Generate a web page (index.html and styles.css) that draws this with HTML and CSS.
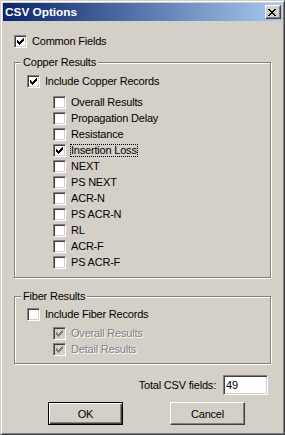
FILE: index.html
```html
<!DOCTYPE html>
<html>
<head>
<meta charset="utf-8">
<title>CSV Options</title>
<link rel="stylesheet" href="styles.css">
</head>
<body>
<div class="window">
  <div class="titlebar">
    <span class="title">CSV Options</span>
    <span class="close"><svg width="8" height="7" viewBox="0 0 8 7" shape-rendering="crispEdges"><path d="M0 0h2v1h-2z M6 0h2v1h-2z M1 1h2v1h-2z M5 1h2v1h-2z M2 2h4v1h-4z M3 3h2v1h-2z M2 4h4v1h-4z M1 5h2v1h-2z M5 5h2v1h-2z M0 6h2v1h-2z M6 6h2v1h-2z" fill="#000"/></svg></span>
  </div>
  <div class="content">
    <div class="row"><span class="cb"><svg class="chk" width="7" height="7" viewBox="0 0 7 7" shape-rendering="crispEdges"><path d="M0 2h1v3h-1z M1 3h1v3h-1z M2 4h1v3h-1z M3 3h1v3h-1z M4 2h1v3h-1z M5 1h1v3h-1z M6 0h1v3h-1z"/></svg></span><span class="lbl">Common Fields</span></div>

    <div class="group copper">
      <span class="legend">Copper Results</span>
      <div class="row"><span class="cb"><svg class="chk" width="7" height="7" viewBox="0 0 7 7" shape-rendering="crispEdges"><path d="M0 2h1v3h-1z M1 3h1v3h-1z M2 4h1v3h-1z M3 3h1v3h-1z M4 2h1v3h-1z M5 1h1v3h-1z M6 0h1v3h-1z"/></svg></span><span class="lbl">Include Copper Records</span></div>
      <div class="sublist">
        <div class="row"><span class="cb"></span><span class="lbl">Overall Results</span></div>
        <div class="row"><span class="cb"></span><span class="lbl">Propagation Delay</span></div>
        <div class="row"><span class="cb"></span><span class="lbl">Resistance</span></div>
        <div class="row"><span class="cb"><svg class="chk" width="7" height="7" viewBox="0 0 7 7" shape-rendering="crispEdges"><path d="M0 2h1v3h-1z M1 3h1v3h-1z M2 4h1v3h-1z M3 3h1v3h-1z M4 2h1v3h-1z M5 1h1v3h-1z M6 0h1v3h-1z"/></svg></span><span class="lbl focus">Insertion Loss</span></div>
        <div class="row"><span class="cb"></span><span class="lbl">NEXT</span></div>
        <div class="row"><span class="cb"></span><span class="lbl">PS NEXT</span></div>
        <div class="row"><span class="cb"></span><span class="lbl">ACR-N</span></div>
        <div class="row"><span class="cb"></span><span class="lbl">PS ACR-N</span></div>
        <div class="row"><span class="cb"></span><span class="lbl">RL</span></div>
        <div class="row"><span class="cb"></span><span class="lbl">ACR-F</span></div>
        <div class="row"><span class="cb"></span><span class="lbl">PS ACR-F</span></div>
      </div>
    </div>

    <div class="group fiber">
      <span class="legend">Fiber Results</span>
      <div class="row"><span class="cb"></span><span class="lbl">Include Fiber Records</span></div>
      <div class="sublist">
        <div class="row disabled"><span class="cb"><svg class="chk" width="7" height="7" viewBox="0 0 7 7" shape-rendering="crispEdges"><path d="M0 2h1v3h-1z M1 3h1v3h-1z M2 4h1v3h-1z M3 3h1v3h-1z M4 2h1v3h-1z M5 1h1v3h-1z M6 0h1v3h-1z"/></svg></span><span class="lbl">Overall Results</span></div>
        <div class="row disabled"><span class="cb"><svg class="chk" width="7" height="7" viewBox="0 0 7 7" shape-rendering="crispEdges"><path d="M0 2h1v3h-1z M1 3h1v3h-1z M2 4h1v3h-1z M3 3h1v3h-1z M4 2h1v3h-1z M5 1h1v3h-1z M6 0h1v3h-1z"/></svg></span><span class="lbl">Detail Results</span></div>
      </div>
    </div>

    <div class="total">
      <span class="total-label">Total CSV fields:</span>
      <span class="field">49</span>
    </div>

    <div class="buttons">
      <span class="btn default">OK</span>
      <span class="btn">Cancel</span>
    </div>
  </div>
</div>
</body>
</html>
```

FILE: styles.css
```css
* { box-sizing: border-box; }
html, body {
  margin: 0;
  padding: 0;
  background: #d4d0c8;
}
body {
  width: 285px;
  height: 435px;
  overflow: hidden;
  font-family: "Liberation Sans", Arial, sans-serif;
  font-size: 11px;
  letter-spacing: -0.2px;
  color: #000;
}
.window {
  width: 285px;
  height: 435px;
  background: #d4d0c8;
  border: 1px solid;
  border-color: #d4d0c8 #404040 #404040 #d4d0c8;
  box-shadow: inset 1px 1px 0 #fff, inset -1px -1px 0 #808080;
  padding: 2px;
  display: flex;
  flex-direction: column;
}
.titlebar {
  height: 18px;
  display: flex;
  align-items: center;
  padding: 0 1px 0 2px;
  background: linear-gradient(to right, #0a246a, #a6caf0);
}
.title {
  flex: 1;
  color: #fff;
  font-weight: bold;
  font-size: 11.8px;
  letter-spacing: 0;
  line-height: 14px;
}
.close {
  width: 16px;
  height: 14px;
  background: #d4d0c8;
  border: 1px solid;
  border-color: #fff #404040 #404040 #fff;
  box-shadow: inset -1px -1px 0 #808080;
}
.close svg {
  display: block;
  margin: 3px 0 0 2px;
}
.content {
  flex: 1;
  display: flex;
  flex-direction: column;
  padding: 14px 11px 0 11px;
}
.row {
  display: flex;
  align-items: center;
  height: 13px;
}
.cb {
  flex: none;
  width: 13px;
  height: 13px;
  background: #fff;
  border: 1px solid;
  border-color: #808080 #fff #fff #808080;
  box-shadow: inset 1px 1px 0 #404040, inset -1px -1px 0 #d4d0c8;
}
.chk {
  display: block;
  margin: 2px 0 0 2px;
  fill: #000;
}
.lbl {
  margin-left: 4px;
  border: 1px dotted transparent;
  line-height: 11px;
  white-space: nowrap;
}
.lbl.focus {
  border-color: #000;
}
.disabled .cb {
  background: #d4d0c8;
}
.disabled .chk {
  fill: #808080;
}
.disabled .lbl {
  color: #808080;
  text-shadow: 1px 1px 0 #fff;
}
.group {
  position: relative;
  border: 1px solid #808080;
  box-shadow: inset 1px 1px 0 #fff, 1px 1px 0 #fff;
}
.legend {
  position: absolute;
  top: -7px;
  left: 6px;
  padding: 0 2px;
  line-height: 13px;
  background: #d4d0c8;
  white-space: nowrap;
}
.copper {
  margin-top: 14px;
  padding: 12px 0 8px 12px;
}
.copper .sublist {
  margin-top: 8px;
}
.fiber {
  margin-top: 18px;
  padding: 11px 0 7px 12px;
}
.fiber .sublist {
  margin-top: 6px;
}
.sublist {
  display: flex;
  flex-direction: column;
  gap: 3px;
  padding-left: 26px;
}
.total {
  margin-top: 11px;
  display: flex;
  justify-content: flex-end;
  align-items: center;
  padding-right: 3px;
}
.total-label {
  margin-right: 7px;
}
.field {
  width: 45px;
  height: 20px;
  background: #fff;
  border: 1px solid;
  border-color: #808080 #fff #fff #808080;
  box-shadow: inset 1px 1px 0 #404040, inset -1px -1px 0 #d4d0c8;
  padding: 0 2px;
  line-height: 18px;
}
.buttons {
  margin-top: 7px;
  display: flex;
  gap: 47px;
  padding-left: 34px;
}
.btn {
  width: 75px;
  height: 23px;
  display: flex;
  align-items: center;
  justify-content: center;
  background: #d4d0c8;
  border: 1px solid;
  border-color: #fff #404040 #404040 #fff;
  box-shadow: inset -1px -1px 0 #808080;
}
.btn.default {
  border-color: #000;
  box-shadow: inset 1px 1px 0 #fff, inset -1px -1px 0 #404040, inset -2px -2px 0 #808080;
}
```
